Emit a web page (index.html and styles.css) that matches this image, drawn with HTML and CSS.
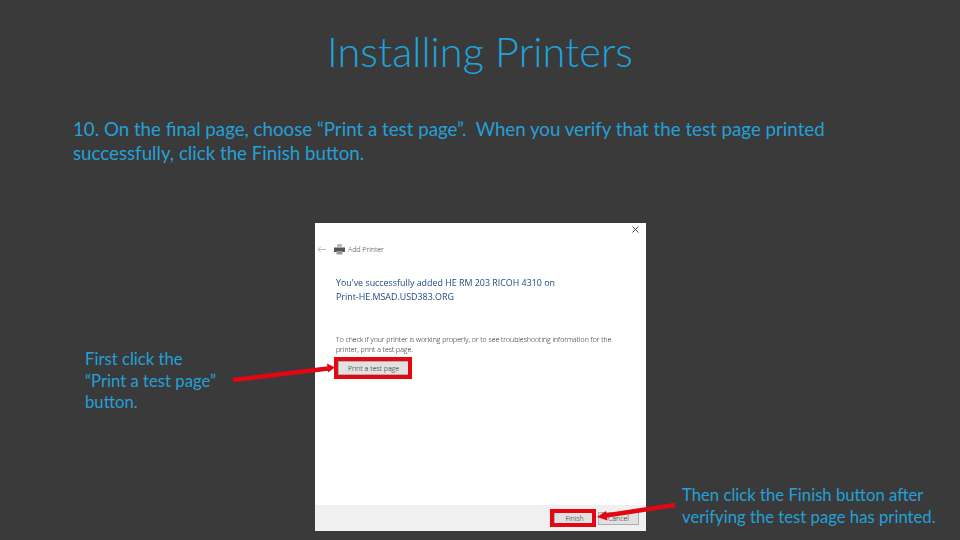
FILE: index.html
```html
<!DOCTYPE html>
<html lang="en">
<head>
<meta charset="utf-8">
<title>Installing Printers</title>
<link rel="stylesheet" href="styles.css">
</head>
<body>
<main class="slide">
  <h1 class="title">Installing Printers</h1>
  <p class="intro">10. On the final page, choose “Print a test page”.&nbsp; When you verify that the test page printed<br>successfully, click the Finish button.</p>

  <section class="dialog">
    <div class="dialog-body">
      <div class="close-row">
        <svg class="close" viewBox="0 0 7 7" width="7" height="7"><path d="M.5.5l6 6M6.5.5l-6 6" stroke="#333" stroke-width=".9" fill="none"/></svg>
      </div>
      <div class="dialog-head">
        <svg class="back" viewBox="0 0 9 7" width="9" height="7"><path d="M9 3.5H1M4 .5l-3 3 3 3" stroke="#aaa" stroke-width=".8" fill="none"/></svg>
        <svg class="printer" viewBox="0 0 11 11" width="11" height="11"><path d="M3 0h5v3H3z" fill="#bbb"/><path d="M0 3.5h11v4.500H0z" fill="#555"/><path d="M2.500 7h6v3.500h-6z" fill="#999"/></svg>
        <span>Add Printer</span>
      </div>
      <h2 class="success">You've successfully added HE RM 203 RICOH 4310 on<br>Print-HE.MSAD.USD383.ORG</h2>
      <p class="hint">To check if your printer is working properly, or to see troubleshooting information for the<br>printer, print a test page.</p>
      <div class="test-row"><span class="btn test-btn">Print a test page</span></div>
    </div>
    <div class="dialog-foot">
      <span class="btn foot-btn finish">Finish</span>
      <span class="btn foot-btn cancel">Cancel</span>
    </div>
  </section>

  <p class="note note-first">First click the<br>“Print a test page”<br>button.</p>
  <p class="note note-then">Then click the Finish button after<br>verifying the test page has printed.</p>

  <div class="mark mark-test"></div>
  <div class="mark mark-finish"></div>
  <svg class="arrows" viewBox="0 0 960 540" width="960" height="540">
    <path d="M233 380L328 368.500" stroke="#e30613" stroke-width="4.500" fill="none"/>
    <path d="M335 367.500l-8-4 1 9z" fill="#e30613"/>
    <path d="M675 505L606 515.500" stroke="#e30613" stroke-width="4.500" fill="none"/>
    <path d="M597 517l9-6 1.500 9.500z" fill="#e30613"/>
  </svg>
</main>
</body>
</html>
```
FILE: styles.css
```css
* { box-sizing: border-box; }
html, body { margin: 0; padding: 0; }
body { width: 960px; height: 540px; overflow: hidden; background: #3a3a3a; }
.slide {
  position: relative;
  width: 960px;
  height: 540px;
  padding: 26px 73px 0;
  background: #3a3a3a;
  color: #24a0d8;
  font-family: Lato, "Open Sans", sans-serif;
  font-weight: 300;
}
.title {
  margin: 0;
  text-align: center;
  font-size: 41.5px;
  line-height: 50px;
  font-weight: 300;
  color: #1ea3dc;
}
.intro {
  margin: 41px 0 0;
  font-size: 18.72px;
  line-height: 24px;
  font-weight: 400;
  white-space: nowrap;
}
.dialog {
  position: absolute;
  left: 315px;
  top: 223px;
  width: 331px;
  height: 308px;
  display: flex;
  flex-direction: column;
  background: #fff;
  font-family: "Open Sans", sans-serif;
  color: #333;
}
.dialog-body { flex: 1; padding: 0 0 0 21px; }
.close-row { display: flex; justify-content: flex-end; padding: 3px 7px 0 0; height: 10px; }
.close { display: block; }
.dialog-head {
  display: flex;
  align-items: center;
  gap: 3px;
  margin: 10px 0 0 -19px;
  height: 12px;
  font-size: 7px;
  color: #222;
}
.back { margin-right: 5px; }
.success {
  margin: 21px 0 0;
  font-size: 8.9px;
  line-height: 14px;
  font-weight: 400;
  color: #1c4a80;
  white-space: nowrap;
  filter: blur(.3px);
}
.hint {
  margin: 31px 0 0;
  font-size: 6.93px;
  line-height: 10px;
  color: #111;
  white-space: nowrap;
  filter: blur(.3px);
}
.test-row { margin-top: 6px; padding-left: 2px; }
.btn {
  display: flex;
  align-items: center;
  justify-content: center;
  background: #e1e1e1;
  border: 1px solid #adadad;
  color: #111;
  font-size: 7px;
}
.test-btn { width: 71px; height: 14px; }
.dialog-foot {
  display: flex;
  justify-content: flex-end;
  gap: 3px;
  height: 26px;
  padding: 7px 7px 0 0;
  background: #f0f0f0;
}
.foot-btn { width: 41px; height: 13px; }
.note {
  position: absolute;
  margin: 0;
  font-size: 16.7px;
  line-height: 21.500px;
  font-weight: 400;
  white-space: nowrap;
}
.note-first { left: 85px; top: 349px; }
.note-then { left: 682px; top: 485px; }
.mark { position: absolute; border: 4px solid #e30613; }
.mark-test { left: 334px; top: 357px; width: 78px; height: 22px; }
.mark-finish { left: 550px; top: 509px; width: 46px; height: 18px; }
.arrows { position: absolute; left: 0; top: 0; pointer-events: none; }
```
